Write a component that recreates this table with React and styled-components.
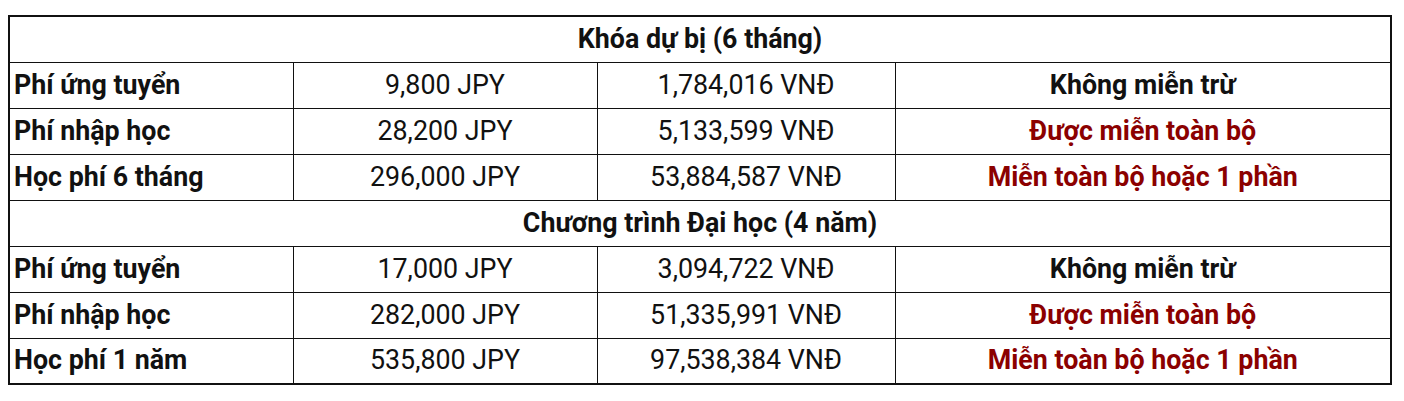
import styled, { createGlobalStyle } from 'styled-components';

const GlobalStyle = createGlobalStyle`
  body {
    margin: 8px;
    background: #fff;
    font-family: Roboto, "Noto Sans", sans-serif;
  }
`;

export const Wrap = styled.div`
  padding-top: 7px;
`;

export const FeeTable = styled.table`
  width: 1382px;
  border-collapse: collapse;
  border: 2px solid #111;
  table-layout: fixed;
  font-size: 26.8px;
  color: #111;
`;

export const Row = styled.tr`
  height: 46px;
`;

export const Cell = styled.td`
  border: 1.5px solid #111;
  padding: 0 4px;
  line-height: 1;
  text-align: ${(p) => (p.$left ? 'left' : 'center')};
  font-weight: ${(p) => (p.$bold ? 700 : 400)};
  color: ${(p) => (p.$red ? '#8b0000' : '#111')};
  white-space: nowrap;
  vertical-align: middle;
`;

const sections = [
  {
    title: 'Khóa dự bị (6 tháng)',
    rows: [
      ['Phí ứng tuyển', '9,800 JPY', '1,784,016 VNĐ', 'Không miễn trừ', false],
      ['Phí nhập học', '28,200 JPY', '5,133,599 VNĐ', 'Được miễn toàn bộ', true],
      ['Học phí 6 tháng', '296,000 JPY', '53,884,587 VNĐ', 'Miễn toàn bộ hoặc 1 phần', true],
    ],
  },
  {
    title: 'Chương trình Đại học (4 năm)',
    rows: [
      ['Phí ứng tuyển', '17,000 JPY', '3,094,722 VNĐ', 'Không miễn trừ', false],
      ['Phí nhập học', '282,000 JPY', '51,335,991 VNĐ', 'Được miễn toàn bộ', true],
      ['Học phí 1 năm', '535,800 JPY', '97,538,384 VNĐ', 'Miễn toàn bộ hoặc 1 phần', true],
    ],
  },
];

function App() {
  return (
    <Wrap>
      <GlobalStyle />
      <FeeTable>
        <colgroup>
          <col style={{ width: 284 }} />
          <col style={{ width: 304 }} />
          <col style={{ width: 298 }} />
          <col style={{ width: 496 }} />
        </colgroup>
        <tbody>
          {sections.map((s) => [
            <Row key={s.title}>
              <Cell colSpan={4} $bold>
                {s.title}
              </Cell>
            </Row>,
            ...s.rows.map((r) => (
              <Row key={s.title + r[0]}>
                <Cell $left $bold>
                  {r[0]}
                </Cell>
                <Cell>{r[1]}</Cell>
                <Cell>{r[2]}</Cell>
                <Cell $bold $red={r[4]}>
                  {r[3]}
                </Cell>
              </Row>
            )),
          ])}
        </tbody>
      </FeeTable>
    </Wrap>
  );
}

export default App;
